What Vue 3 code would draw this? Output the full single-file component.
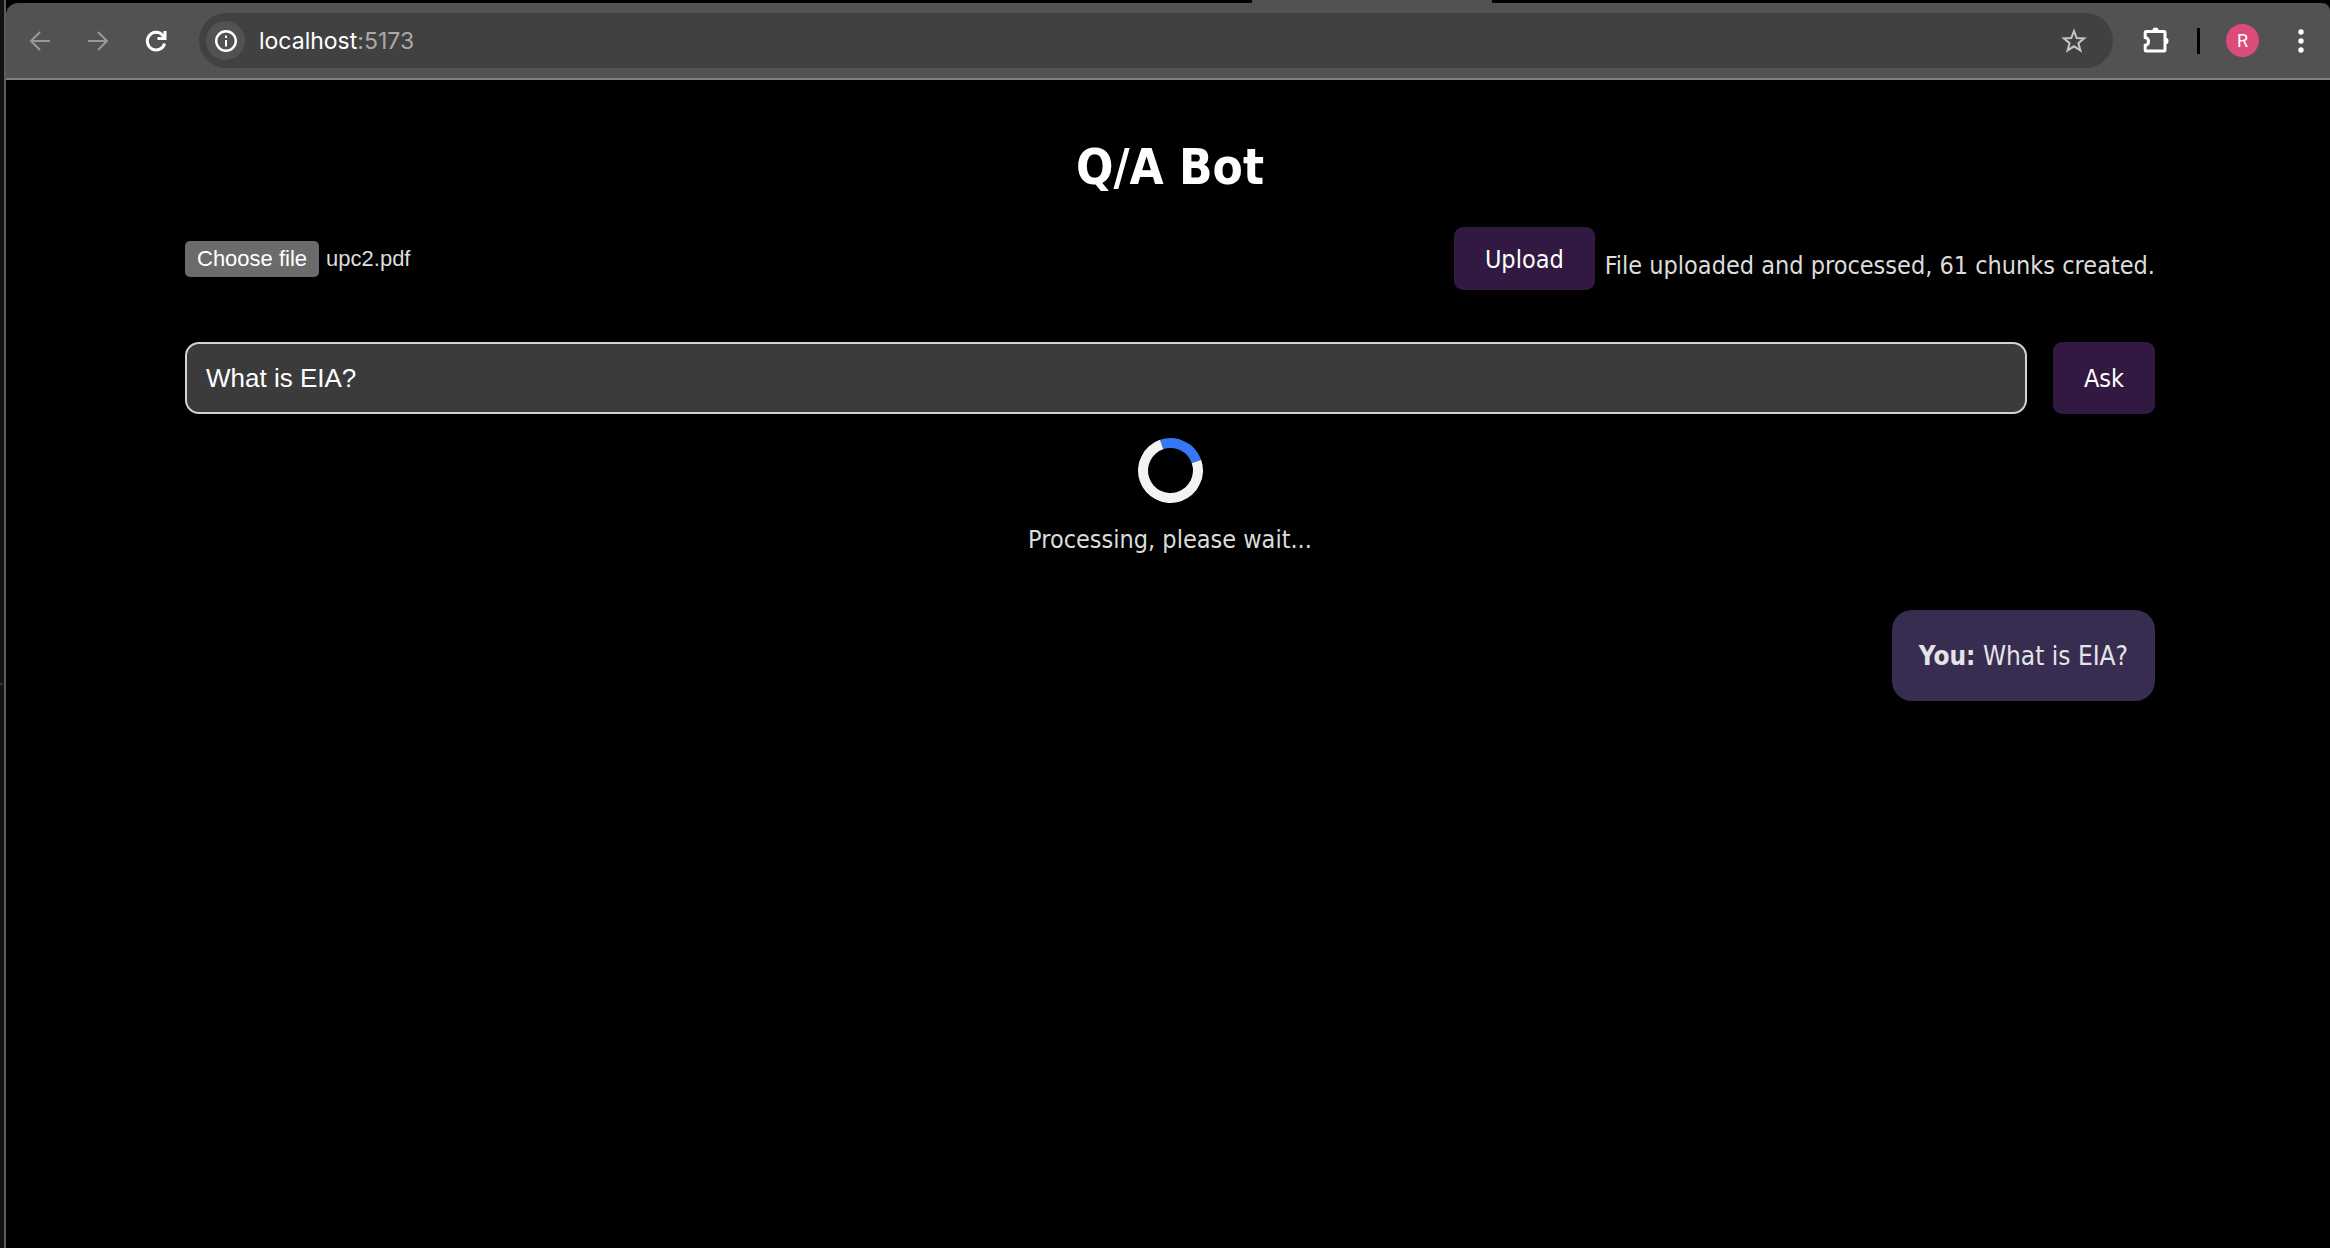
<script setup>
import { ref } from 'vue'

const question = ref('What is EIA?')
const fileName = ref('upc2.pdf')
const status = ref('File uploaded and processed, 61 chunks created.')
const messages = ref([{ id: 1, author: 'You', text: 'What is EIA?' }])

function pickFile(event) {
  const file = event.target.files[0]
  if (file) fileName.value = file.name
}
</script>

<template>
  <div class="screen">
    <div class="edge" aria-hidden="true"><span class="edge-mark"></span></div>
    <div class="window">
      <div class="tab-strip"><span class="tab"></span></div>
      <header class="toolbar">
        <button class="tool dim" aria-label="Back">
          <svg width="24" height="24" viewBox="0 0 24 24"><path d="M22 12H3M12 3l-9 9 9 9" /></svg>
        </button>
        <button class="tool dim" aria-label="Forward">
          <svg width="24" height="24" viewBox="0 0 24 24"><path d="M2 12h19M12 3l9 9-9 9" /></svg>
        </button>
        <button class="tool" aria-label="Reload">
          <svg width="24" height="24" viewBox="0 0 24 24" class="bold"><path d="M20.600 14.500A8.800 8.800 0 1 1 18.600 6.200L20.500 8.200M21 2v7.500h-7.500" /></svg>
        </button>
        <div class="address">
          <span class="site-info">
            <svg width="24" height="24" viewBox="0 0 24 24" class="ring"><circle cx="12" cy="12" r="9.800" /><path class="thin" d="M12 11v6.500M12 6.500v2.500" /></svg>
          </span>
          <span class="url"><span class="host">localhost</span>:5173</span>
          <button class="star" aria-label="Bookmark this page">
            <svg width="28" height="28" viewBox="0 0 28 28"><path d="M14 4l2.700 7 7.500.400-5.800 4.700 2 7.300-6.400-4.100-6.400 4.100 2-7.300-5.800-4.700 7.500-.400z" /></svg>
          </button>
        </div>
        <button class="tool extensions" aria-label="Extensions">
          <svg width="28" height="28" viewBox="0 0 28 28">
            <path d="M4.200 4.500H22a1 1 0 0 1 1 1V23a1 1 0 0 1-1 1H4.200a1 1 0 0 1-1-1v-4.700c4.400-.5 4.400-7.100 0-7.700V5.500a1 1 0 0 1 1-1z" />
            <path class="solid" d="M10.300 4a3.200 3.400 0 0 1 6.400 0zM23.500 10.800a3 3.200 0 0 1 0 6.400z" />
          </svg>
        </button>
        <span class="divider"></span>
        <button class="avatar" aria-label="Profile">R</button>
        <button class="tool menu" aria-label="Menu">
          <svg width="24" height="24" viewBox="0 0 24 24"><g class="solid"><circle cx="12" cy="3" r="2.700" /><circle cx="12" cy="12" r="2.700" /><circle cx="12" cy="21" r="2.700" /></g></svg>
        </button>
      </header>

      <main class="page">
        <h1>Q/A Bot</h1>
        <section class="upload-row">
          <div class="file">
            <label for="pdf" class="file-button">Choose file</label>
            <input id="pdf" type="file" class="file-input" @change="pickFile" />
            <span>{{ fileName }}</span>
          </div>
          <div class="upload">
            <button class="action">Upload</button>
            <span class="status">{{ status }}</span>
          </div>
        </section>
        <form class="ask-row" @submit.prevent>
          <input v-model="question" type="text" aria-label="Question" class="question" />
          <button class="action ask">Ask</button>
        </form>
        <div class="loading" role="status">
          <div class="spinner"></div>
          <p>Processing, please wait...</p>
        </div>
        <div class="chat">
          <div v-for="m in messages" :key="m.id" class="bubble"><strong>{{ m.author }}:</strong> {{ m.text }}</div>
        </div>
      </main>
    </div>
  </div>
</template>

<style>
body {
  background: #000;
}
</style>

<style scoped>
* {
  box-sizing: border-box;
}
.screen {
  display: flex;
  min-height: 100vh;
  background: #000;
  color: #dcdcdc;
  font-family: "DejaVu Sans Condensed", "Noto Sans", sans-serif;
  font-size: 25px;
  line-height: 32px;
}
button {
  border: 0;
  padding: 0;
  background: none;
  color: inherit;
  font: inherit;
}
.edge {
  display: flex;
  align-items: center;
  width: 4px;
  background: #121212;
  padding-top: 120px;
}
.edge-mark {
  width: 3px;
  height: 2px;
  background: #333;
}
.window {
  flex: 1;
  min-width: 0;
  border-left: 2px solid #5c5c5c;
}
.tab-strip {
  display: flex;
  height: 3px;
  padding-left: 1246px;
}
.tab {
  width: 240px;
  background: #525252;
}
.toolbar {
  display: flex;
  align-items: center;
  height: 77px;
  padding-right: 15px;
  padding-left: 5px;
  background: #525252;
  border-bottom: 2px solid #808080;
  border-radius: 12px 8px 0 0;
}
.tool {
  display: flex;
  align-items: center;
  justify-content: center;
  width: 58px;
  height: 52px;
  color: #fff;
}
.dim {
  color: #999;
}
svg {
  display: block;
  fill: none;
  stroke: currentColor;
  stroke-width: 2;
}
.bold {
  stroke-width: 3;
}
.ring {
  stroke-width: 2.4;
}
.thin {
  stroke-width: 2;
}
.solid {
  fill: currentColor;
  stroke: none;
}
.extensions svg {
  stroke-width: 3;
}
.address {
  display: flex;
  flex: 1;
  align-items: center;
  height: 55px;
  margin-left: 14px;
  padding: 0 25px 0 7px;
  border-radius: 28px;
  background: #414141;
}
.site-info {
  display: flex;
  align-items: center;
  justify-content: center;
  width: 39px;
  height: 39px;
  margin-right: 14px;
  border-radius: 50%;
  background: #525252;
  color: #fff;
}
.url {
  flex: 1;
  color: #aaa;
  font-family: Inter, sans-serif;
  font-size: 23px;
}
.host {
  color: #fff;
}
.star {
  color: #c4c4c4;
}
.extensions {
  margin-left: 14px;
}
.divider {
  width: 3px;
  height: 26px;
  margin: 0 26px 0 12px;
  background: #000;
}
.avatar {
  width: 33px;
  height: 33px;
  border-radius: 50%;
  background: #dc4c79;
  color: #fff;
  font-family: Roboto, sans-serif;
  font-size: 18px;
  line-height: 33px;
}
.menu {
  width: 28px;
  margin-left: 28px;
}
.page {
  padding: 60px 175px 0 179px;
}
h1 {
  margin: 0;
  color: #fff;
  font-size: 49px;
  line-height: 56px;
  text-align: center;
}
.upload-row {
  display: flex;
  align-items: center;
  justify-content: space-between;
  margin-top: 31px;
}
.file {
  position: relative;
  display: flex;
  align-items: center;
  gap: 7px;
  font-family: "Liberation Sans", sans-serif;
  font-size: 22px;
}
.file-button {
  padding: 0 12px;
  border-radius: 5px;
  background: #6b6b6b;
  color: #fff;
  line-height: 36px;
}
.file-input {
  position: absolute;
  inset: 0;
  width: 100%;
  opacity: 0;
}
.upload {
  display: flex;
  align-items: center;
  gap: 10px;
}
.status {
  padding-top: 15px;
}
.action {
  height: 63px;
  padding: 2px 31px 0;
  border-radius: 9px;
  background: #321942;
  color: #fff;
}
.ask-row {
  display: flex;
  gap: 26px;
  margin-top: 52px;
}
.question {
  flex: 1;
  min-width: 0;
  height: 72px;
  padding: 0 19px;
  border: 2px solid #d2d2d8;
  border-radius: 14px;
  background: #3b3b3b;
  color: #fff;
  font-family: "Liberation Sans", sans-serif;
  font-size: 26px;
}
.ask {
  height: 72px;
}
.loading {
  display: flex;
  flex-direction: column;
  align-items: center;
  gap: 21px;
  margin-top: 24px;
}
.spinner {
  width: 65px;
  height: 65px;
  border: 10px solid #f3f3f3;
  border-top-color: #3478f6;
  border-radius: 50%;
  transform: rotate(26deg);
}
.loading p {
  margin: 0;
}
.chat {
  display: flex;
  flex-direction: column;
  align-items: flex-end;
  margin-top: 54px;
}
.bubble {
  padding: 30px 27px 29px;
  border-radius: 20px;
  background: #382d50;
  color: #e4e4e8;
  font-size: 26px;
}
</style>
